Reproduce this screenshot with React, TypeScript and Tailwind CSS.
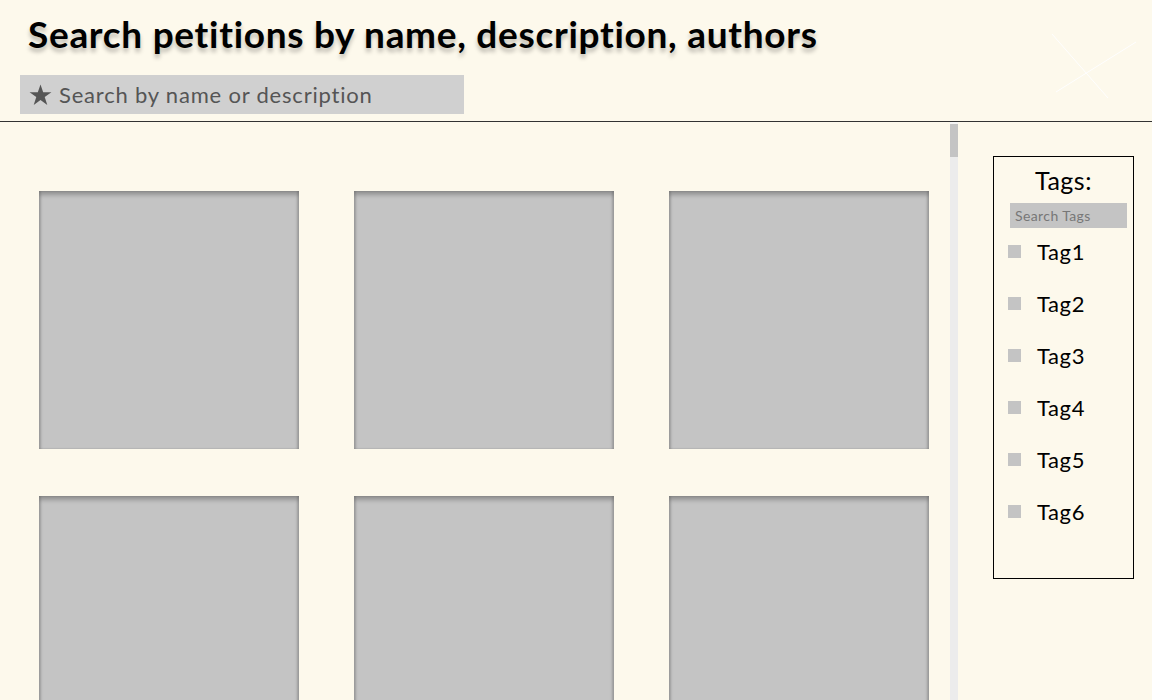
import React from 'react';

const tags = ['Tag1', 'Tag2', 'Tag3', 'Tag4', 'Tag5', 'Tag6'];

const Card: React.FC = () => (
  <div className="h-[258px] w-[260px] bg-[#c4c4c4] shadow-[inset_0_4px_4px_rgba(0,0,0,0.25),inset_2px_0_2px_rgba(0,0,0,0.12),inset_-2px_0_2px_rgba(0,0,0,0.12)]" />
);

const App: React.FC = () => {
  return (
    <div className="h-[700px] w-[1152px] overflow-hidden bg-[#fdf9ec] font-['Lato',sans-serif] text-black">
      <header className="relative h-[122px] border-b border-[#333] pl-[20px] pt-[12px]">
        <h1 className="pl-[8px] text-[37px] font-bold leading-[44px] tracking-[0.7px] [text-shadow:0_4px_4px_rgba(0,0,0,0.25)]">
          Search petitions by name, description, authors
        </h1>
        <div className="mt-[19px] flex h-[39px] w-[444px] items-center gap-[7px] bg-[#d0d0d0] pl-[9px] text-[22px] tracking-[0.8px] text-[#555]">
          <svg width="23" height="22" viewBox="0 0 24 23" className="shrink-0">
            <path d="M12 0.5l2.8 8.1h8.6l-7 5.1 2.7 8.2L12 16.8l-7.1 5.1 2.7-8.2-7-5.1h8.6z" fill="#555555" />
          </svg>
          <span>Search by name or description</span>
        </div>
        <svg className="absolute left-[1050px] top-[30px]" width="90" height="72" viewBox="0 0 90 72">
          <line x1="2" y1="4" x2="58" y2="68" stroke="#ffffff" strokeWidth="1" />
          <line x1="6" y1="62" x2="86" y2="12" stroke="#ffffff" strokeWidth="1" />
        </svg>
      </header>

      <div className="flex h-[578px]">
        <div className="flex w-[958px]">
          <div className="grid w-[950px] grid-cols-[260px_260px_260px] content-start gap-x-[55px] gap-y-[47px] pl-[39px] pt-[69px]">
            {Array.from({ length: 6 }).map((_, i) => (
              <Card key={i} />
            ))}
          </div>
          <div className="flex w-[8px] flex-col bg-[#ececec]">
            <div className="h-[2px] bg-[#f5f5f5]" />
            <div className="h-[33px] bg-[#c4c4c4]" />
          </div>
        </div>

        <div className="pl-[35px] pt-[34px]">
          <aside className="flex h-[423px] w-[141px] flex-col items-center border border-black">
            <div className="mt-[9px] text-[25px] leading-[28px] tracking-[0.5px]">Tags:</div>
            <div className="ml-[16px] mt-[9px] flex h-[25px] w-[117px] items-center self-start bg-[#c4c4c4] pl-[5px] text-[14px] tracking-[0.4px] text-[#777]">
              Search Tags
            </div>
            <ul className="mt-[10px] flex w-full flex-col gap-[26px] pl-[14px]">
              {tags.map((t) => (
                <li key={t} className="flex h-[26px] items-center">
                  <span className="h-[13px] w-[13px] bg-[#c4c4c4]" />
                  <span className="ml-[16px] text-[22px] tracking-[0.6px]">{t}</span>
                </li>
              ))}
            </ul>
          </aside>
        </div>
      </div>
    </div>
  );
};

export default App;
